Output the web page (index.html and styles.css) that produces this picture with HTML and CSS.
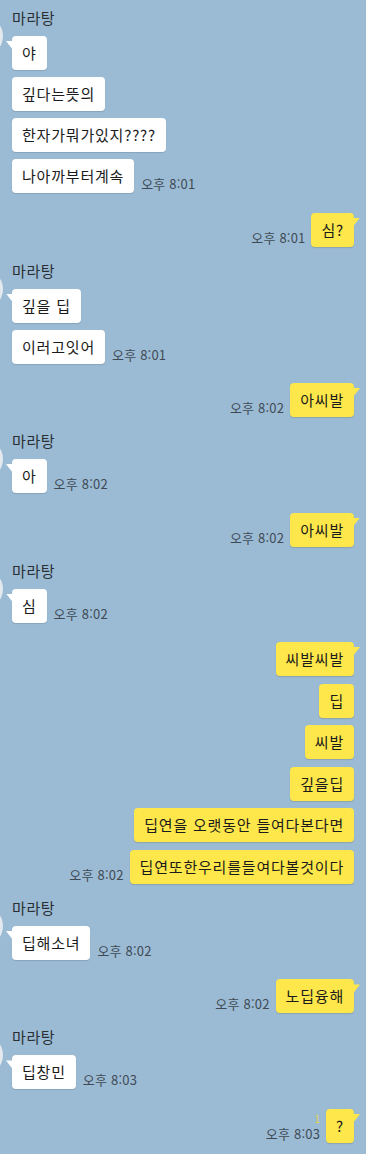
FILE: index.html
```html
<!DOCTYPE html>
<html lang="ko">
<head>
<meta charset="utf-8">
<link rel="stylesheet" href="styles.css">
</head>
<body>
<div class="chat">
  <section class="grp in">
    <div class="avatar"></div>
    <div class="col">
      <div class="name">마라탕</div>
      <div class="row"><div class="bubble tail">야</div></div>
      <div class="row"><div class="bubble">깊다는뜻의</div></div>
      <div class="row"><div class="bubble">한자가뭐가있지????</div></div>
      <div class="row"><div class="bubble">나아까부터계속</div><span class="time">오후 8:01</span></div>
    </div>
  </section>
  <section class="grp out">
    <div class="row"><span class="time">오후 8:01</span><div class="bubble tail">심?</div></div>
  </section>
  <section class="grp in">
    <div class="avatar"></div>
    <div class="col">
      <div class="name">마라탕</div>
      <div class="row"><div class="bubble tail">깊을 딥</div></div>
      <div class="row"><div class="bubble">이러고잇어</div><span class="time">오후 8:01</span></div>
    </div>
  </section>
  <section class="grp out">
    <div class="row"><span class="time">오후 8:02</span><div class="bubble tail">아씨발</div></div>
  </section>
  <section class="grp in">
    <div class="avatar"></div>
    <div class="col">
      <div class="name">마라탕</div>
      <div class="row"><div class="bubble tail">아</div><span class="time">오후 8:02</span></div>
    </div>
  </section>
  <section class="grp out">
    <div class="row"><span class="time">오후 8:02</span><div class="bubble tail">아씨발</div></div>
  </section>
  <section class="grp in">
    <div class="avatar"></div>
    <div class="col">
      <div class="name">마라탕</div>
      <div class="row"><div class="bubble tail">심</div><span class="time">오후 8:02</span></div>
    </div>
  </section>
  <section class="grp out">
    <div class="row"><div class="bubble tail">씨발씨발</div></div>
    <div class="row"><div class="bubble">딥</div></div>
    <div class="row"><div class="bubble">씨발</div></div>
    <div class="row"><div class="bubble">깊을딥</div></div>
    <div class="row"><div class="bubble">딥연을 오랫동안 들여다본다면</div></div>
    <div class="row"><span class="time">오후 8:02</span><div class="bubble">딥연또한우리를들여다볼것이다</div></div>
  </section>
  <section class="grp in">
    <div class="avatar"></div>
    <div class="col">
      <div class="name">마라탕</div>
      <div class="row"><div class="bubble tail">딥해소녀</div><span class="time">오후 8:02</span></div>
    </div>
  </section>
  <section class="grp out">
    <div class="row"><span class="time">오후 8:02</span><div class="bubble tail">노딥융해</div></div>
  </section>
  <section class="grp in">
    <div class="avatar"></div>
    <div class="col">
      <div class="name">마라탕</div>
      <div class="row"><div class="bubble tail">딥창민</div><span class="time">오후 8:03</span></div>
    </div>
  </section>
  <section class="grp out last">
    <div class="row">
      <div class="meta"><span class="unread">1</span><span class="time">오후 8:03</span></div>
      <div class="bubble tail">?</div>
    </div>
  </section>
</div>
</body>
</html>
```

FILE: styles.css
```css
* { box-sizing: border-box; }
html, body {
  margin: 0;
  padding: 0;
  background: #9bbbd4;
}
body {
  width: 366px;
  height: 1154px;
  overflow: hidden;
  font-family: "Noto Sans CJK KR", "Noto Sans", sans-serif;
  color: #1b1b1b;
}
.chat {
  padding-top: 8px;
  display: flex;
  flex-direction: column;
}
.grp {
  display: flex;
}
.grp.in {
  margin-bottom: 19.5px;
}
.grp.out {
  flex-direction: column;
  align-items: flex-end;
  padding-right: 12px;
  margin-bottom: 14px;
  gap: 7.6px;
}
.avatar {
  flex: none;
  width: 40px;
  height: 40px;
  margin-left: -37px;
  margin-top: 8px;
  margin-right: 9px;
  border-radius: 50%;
  background: #e3e9ee;
}
.col {
  display: flex;
  flex-direction: column;
  gap: 7px;
}
.name {
  font-size: 15px;
  line-height: 20px;
  letter-spacing: 0.6px;
  color: #2a2f33;
  margin-bottom: 1px;
}
.row {
  display: flex;
  align-items: flex-end;
}
.bubble {
  position: relative;
  font-size: 15px;
  line-height: 20px;
  letter-spacing: 0.8px;
  padding: 7px 10px;
  border-radius: 4px;
  background: #fff;
  box-shadow: 0 1px 1px rgba(40, 60, 80, 0.18);
  white-space: nowrap;
}
.out .bubble {
  background: #fde74a;
  box-shadow: 0 1px 1px rgba(90, 80, 20, 0.22);
}
.bubble.tail::before {
  content: "";
  position: absolute;
  top: 5px;
  width: 7px;
  height: 9px;
}
.in .bubble.tail::before {
  left: -6px;
  background: #fff;
  clip-path: polygon(0 0, 100% 0, 100% 100%);
}
.out .bubble.tail::before {
  right: -6px;
  background: #fde74a;
  clip-path: polygon(0 0, 100% 0, 0 100%);
}
.time {
  font-size: 13px;
  line-height: 16px;
  letter-spacing: 0.2px;
  color: #3f4a55;
  white-space: nowrap;
  margin-bottom: 1px;
}
.in .time { margin-left: 7px; }
.out .time { margin-right: 6px; }
.meta {
  display: flex;
  flex-direction: column;
  align-items: flex-end;
  margin-right: 6px;
}
.meta .time { margin-right: 0; }
.unread {
  font-size: 10px;
  line-height: 12px;
  color: #e8d64a;
  margin-bottom: 1px;
}
```
